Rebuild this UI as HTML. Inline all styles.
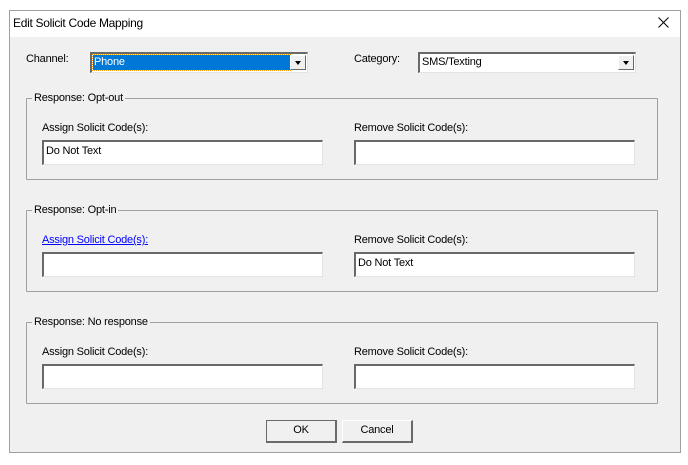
<!DOCTYPE html><html><head><style>
body{margin:0;width:688px;height:465px;background:#fff;position:relative;font-family:"Liberation Sans",sans-serif;font-size:11px;color:#000;overflow:hidden;letter-spacing:-0.2px}
div{position:absolute;box-sizing:border-box}
.win{left:9px;top:10px;width:672px;height:443px;border:1px solid #a0a0a0;background:#f0f0f0}
.tb{left:10px;top:11px;width:670px;height:26px;background:#fff}
.grp{border:1px solid #a0a0a0;border-radius:1px}
.gl{background:#f0f0f0;padding:0 2px;line-height:12px}
.tx{background:#fff;border-top:2px solid #696969;border-left:2px solid #696969;border-right:1px solid #e3e3e3;border-bottom:1px solid #e3e3e3;padding:1px 2px;line-height:16px}
.cb{background:#fff;border-top:2px solid #696969;border-left:2px solid #696969;border-right:1px solid #e3e3e3;border-bottom:1px solid #e3e3e3;line-height:15px}
.ar{top:1px;right:1px;width:16px;height:15px;background:#f0f0f0;border-right:1px solid #696969;border-bottom:1px solid #696969;border-top:1px solid #fff;border-left:1px solid #fff}
.ar:after{content:"";position:absolute;left:4px;top:5px;border-left:3px solid transparent;border-right:3px solid transparent;border-top:4px solid #000}
.btn{background:#f0f0f0;border-top:1px solid #fff;border-left:1px solid #fff;border-right:2px solid #696969;border-bottom:2px solid #696969;text-align:center;line-height:19px;font-size:11px}
</style></head><body>
<div class="win"></div>
<div class="tb"></div>
<div style="left:13px;top:16px;font-size:12px;letter-spacing:-0.3px">Edit Solicit Code Mapping</div>
<svg style="position:absolute;left:658px;top:17px" width="11" height="11"><path d="M0.5 0.5L10.5 10.5M10.5 0.5L0.5 10.5" stroke="#000" stroke-width="1"/></svg>

<div style="left:26px;top:53px">Channel:</div>
<div class="cb" style="left:90px;top:52px;width:218px;height:21px"><div style="left:1px;top:1px;width:197px;height:15px;background:#0078d7;color:#fff;outline:1px dotted #ff9900;padding-left:1px">Phone</div><div class="ar"></div></div>
<div style="left:354px;top:53px">Category:</div>
<div class="cb" style="left:418px;top:52px;width:218px;height:21px"><div style="left:1px;top:1px;padding-left:1px">SMS/Texting</div><div class="ar"></div></div>

<div class="grp" style="left:26px;top:98px;width:632px;height:82px"></div>
<div class="gl" style="left:32px;top:92px">Response: Opt-out</div>
<div style="left:42px;top:122px">Assign Solicit Code(s):</div>
<div style="left:354px;top:122px">Remove Solicit Code(s):</div>
<div class="tx" style="left:42px;top:140px;width:281px;height:25px">Do Not Text</div>
<div class="tx" style="left:354px;top:140px;width:281px;height:25px"></div>

<div class="grp" style="left:26px;top:210px;width:632px;height:82px"></div>
<div class="gl" style="left:32px;top:204px">Response: Opt-in</div>
<div style="left:42px;top:234px;color:#0000ff;text-decoration:underline">Assign Solicit Code(s):</div>
<div style="left:354px;top:234px">Remove Solicit Code(s):</div>
<div class="tx" style="left:42px;top:252px;width:281px;height:25px"></div>
<div class="tx" style="left:354px;top:252px;width:281px;height:25px">Do Not Text</div>

<div class="grp" style="left:26px;top:322px;width:632px;height:82px"></div>
<div class="gl" style="left:32px;top:316px">Response: No response</div>
<div style="left:42px;top:346px">Assign Solicit Code(s):</div>
<div style="left:354px;top:346px">Remove Solicit Code(s):</div>
<div class="tx" style="left:42px;top:364px;width:281px;height:25px"></div>
<div class="tx" style="left:354px;top:364px;width:281px;height:25px"></div>

<div class="btn" style="left:266px;top:420px;width:71px;height:23px;outline:1px solid #696969;outline-offset:-1px">OK</div>
<div class="btn" style="left:342px;top:420px;width:71px;height:23px">Cancel</div>
</body></html>
